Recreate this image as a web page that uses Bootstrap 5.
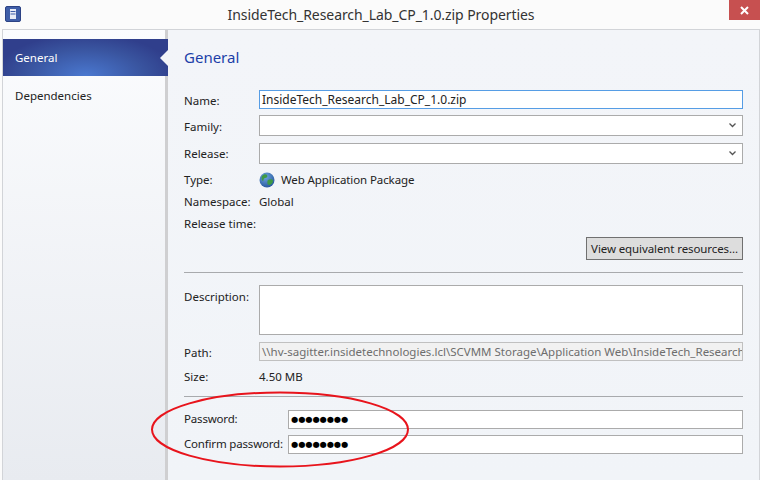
<!DOCTYPE html>
<html lang="en">
<head>
  <meta charset="UTF-8">
  <title>InsideTech_Research_Lab_CP_1.0.zip Properties</title>
  <link href="https://cdn.jsdelivr.net/npm/bootstrap@5.3.3/dist/css/bootstrap.min.css" rel="stylesheet">
  <style>
    html,body{height:100%;}
    body{background:#fff;font-family:"Noto Sans","Open Sans",sans-serif;font-size:11.5px;color:#222;overflow:hidden;}
    #win{width:760px;height:480px;position:relative;background:#fbfbfb;}
    #titlebar{height:29px;}
    #wintitle{font-size:14px;color:#333;letter-spacing:-.07px;padding-left:2px;line-height:30px;}
    #appicon{left:5px;top:6px;position:absolute;}
    #closebtn{position:absolute;right:0;top:0;width:31px;height:20px;background:#c75050;}
    #shell{height:451px;margin-left:2px;border:1px solid #d2d4d8;border-bottom:0;width:758px;background:linear-gradient(#f3f5f9,#f1f4f8);}
    #side{width:165px;background:linear-gradient(#fbfcfe,#e8ebf0);border-right:3px solid #cfcfd1;padding-top:9px;flex:none;}
    .sideitem{height:37px;line-height:37px;padding-left:12px;position:relative;margin-bottom:1px;}
    .sideitem + .sideitem{line-height:38px;}
    .sideitem.on{background:radial-gradient(ellipse 90px 42px at 50% 100%,#4a78d0 0%,#39549f 65%,#303f8c 100%);color:#fff;margin-right:-3px;}
    .sideitem.on::after{content:"";position:absolute;right:0;top:11px;border:8px solid transparent;border-left:0;border-right:8px solid #f3f5f9;}
    #pane{padding:15px 15px 0 16px;width:590px;}
    #panehead{font-size:15px;color:#1c3fa8;line-height:24px;height:44px;margin:0;font-weight:400;}
    .frow{display:flex;align-items:center;}
    .flabel{width:75px;flex:none;white-space:nowrap;}
    .flabel.wide{width:104px;letter-spacing:-.18px;}
    .nudge2{padding-top:2px;}
    .nudge3{padding-top:3px;}
    .fld{flex:1;background:#fff;border:1px solid #ababab;height:19px;padding:0 2px;line-height:17px;white-space:nowrap;overflow:hidden;min-width:0;}
    .fld.act{border-color:#569de5;font-size:12px;}
    .fld.dis{background:#f1f1f1;color:#6d6d6d;border-color:#c0c0c0;}
    .fld.combo{height:21px;display:flex;justify-content:flex-end;align-items:center;padding-right:6px;}
    .dots{font-family:"DejaVu Sans",sans-serif;font-size:8.2px;color:#000;line-height:17px;}
    .seprule{border-top:1px solid #a8aaad;}
    #viewbtn{width:157px;height:23px;background:#dddddd;border:1px solid #707070;border-radius:0;font-size:11.5px;letter-spacing:-.1px;line-height:20px;padding:0;color:#222;white-space:nowrap;}
    #descbox{height:50px;}
    #typeicon{margin-right:6px;}
    #typetext{letter-spacing:-.1px;}
    .rowgap6{margin-bottom:6px;}
    .rowgap7{margin-bottom:7px;}
    .rowh21{height:21px;}
    .rowh22{height:22px;}
    #typerow{padding-bottom:2px;}
    #sizerow{padding-top:2px;}
    #btnrow{margin-top:3px;margin-bottom:12px;}
    #rule1{margin-bottom:12px;}
    #pathrow{margin-bottom:3px;}
    #rule2{margin-top:9px;margin-bottom:13px;}
    #ring{position:absolute;left:150px;top:390px;pointer-events:none;}
  </style>
</head>
<body>
<div id="win">
  <div id="titlebar" class="d-flex justify-content-center">
    <svg id="appicon" width="16" height="16" viewBox="0 0 16 16">
      <rect x=".5" y=".5" width="15" height="15" rx="1.5" fill="#3f5ea8" stroke="#2c4284"/>
      <rect x="5" y="3" width="6" height="10" fill="#e8ecf6"/>
      <path d="M5.5 5.5h5M5.5 8h5" stroke="#3f5ea8"/>
    </svg>
    <span id="wintitle">InsideTech_Research_Lab_CP_1.0.zip Properties</span>
    <div id="closebtn" class="d-flex align-items-center justify-content-center">
      <svg width="9" height="9" viewBox="0 0 9 9"><path d="M1 1l7 7M8 1L1 8" stroke="#fff" stroke-width="2"/></svg>
    </div>
  </div>
  <div id="shell" class="d-flex">
    <div id="side">
      <div class="sideitem on">General</div>
      <div class="sideitem">Dependencies</div>
    </div>
    <div id="pane">
      <h1 id="panehead">General</h1>
      <div class="frow rowgap6"><span class="flabel nudge3">Name:</span><div class="fld act">InsideTech_Research_Lab_CP_1.0.zip</div></div>
      <div class="frow rowgap7"><span class="flabel nudge2">Family:</span><div class="fld combo"><svg width="7" height="5" viewBox="0 0 7 5"><path d="M.5 .5L3.5 3.5L6.5 .5" fill="none" stroke="#555" stroke-width="1.3"/></svg></div></div>
      <div class="frow rowgap6"><span class="flabel">Release:</span><div class="fld combo"><svg width="7" height="5" viewBox="0 0 7 5"><path d="M.5 .5L3.5 3.5L6.5 .5" fill="none" stroke="#555" stroke-width="1.3"/></svg></div></div>
      <div id="typerow" class="frow rowh21"><span class="flabel">Type:</span>
        <svg id="typeicon" width="16" height="16" viewBox="0 0 16 16">
          <defs><radialGradient id="globefill" cx=".4" cy=".3" r=".8"><stop offset="0" stop-color="#6ea6e0"/><stop offset="1" stop-color="#1f4f96"/></radialGradient></defs>
          <circle cx="8" cy="8" r="7.5" fill="url(#globefill)"/>
          <path d="M3 4c2-2 4-2 5-1s0 3-2 3-1 3-2 3-2-3-1-5zM9 8c2-1 5-1 5 1s-2 4-4 4-2-4-1-5z" fill="#3f9a45"/>
        </svg>
        <span id="typetext">Web Application Package</span></div>
      <div class="frow rowh21"><span class="flabel">Namespace:</span><span>Global</span></div>
      <div class="frow rowh22"><span class="flabel">Release time:</span></div>
      <div id="btnrow" class="d-flex justify-content-end"><button id="viewbtn" class="btn">View equivalent resources...</button></div>
      <div id="rule1" class="seprule"></div>
      <div class="frow align-items-start rowgap6"><span class="flabel nudge3">Description:</span><div class="fld" id="descbox"></div></div>
      <div id="pathrow" class="frow"><span class="flabel nudge3">Path:</span><div class="fld dis">\\hv-sagitter.insidetechnologies.lcl\SCVMM Storage\Application Web\InsideTech_Research_Lab_CP_1.0.zip</div></div>
      <div id="sizerow" class="frow rowh22"><span class="flabel">Size:</span><span>4.50 MB</span></div>
      <div id="rule2" class="seprule"></div>
      <div class="frow rowgap6"><span class="flabel wide">Password:</span><div class="fld dots">&#9679;&#9679;&#9679;&#9679;&#9679;&#9679;&#9679;&#9679;</div></div>
      <div class="frow"><span class="flabel wide">Confirm password:</span><div class="fld dots">&#9679;&#9679;&#9679;&#9679;&#9679;&#9679;&#9679;&#9679;</div></div>
    </div>
  </div>
  <svg id="ring" width="262" height="80" viewBox="0 0 262 80">
    <ellipse cx="130" cy="39.5" rx="128" ry="37" fill="none" stroke="#e8141c" stroke-width="2"/>
  </svg>
</div>
<script src="https://cdn.jsdelivr.net/npm/bootstrap@5.3.3/dist/js/bootstrap.bundle.min.js"></script>
</body>
</html>
